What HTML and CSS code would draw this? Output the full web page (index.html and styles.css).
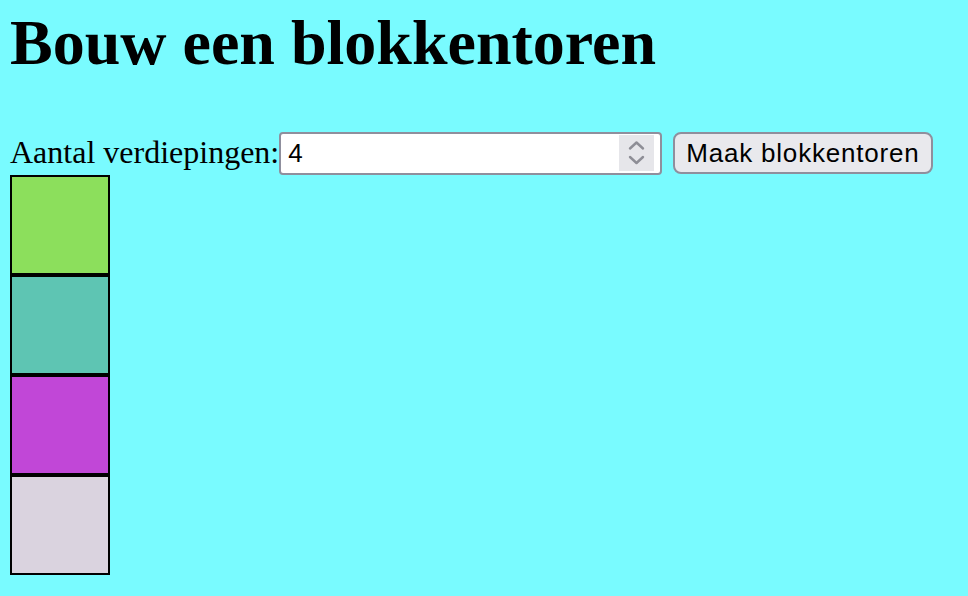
FILE: index.html
```html
<!DOCTYPE html>
<html lang="nl">
<head>
<meta charset="utf-8">
<title>Bouw een blokkentoren</title>
<link rel="stylesheet" href="styles.css">
</head>
<body>
<h1 class="title">Bouw een blokkentoren</h1>
<div class="controls">
  <label class="label" for="floors">Aantal verdiepingen:</label>
  <span class="num-field">
    <input class="num-input" id="floors" type="text" value="4">
    <span class="spin">
      <svg width="35" height="36" viewBox="0 0 35 36">
        <polyline points="11,13.5 17.5,7.5 24,13.5" fill="none" stroke="#8e8e96" stroke-width="2.4" stroke-linecap="round" stroke-linejoin="round"/>
        <polyline points="11,22 17.5,28 24,22" fill="none" stroke="#8e8e96" stroke-width="2.4" stroke-linecap="round" stroke-linejoin="round"/>
      </svg>
    </span>
  </span>
  <button class="btn" type="button">Maak blokkentoren</button>
</div>
<div class="tower">
  <div class="block green"></div>
  <div class="block teal"></div>
  <div class="block purple"></div>
  <div class="block lavender"></div>
</div>
</body>
</html>
```

FILE: styles.css
```css
html, body {
  margin: 0;
  background: #79fbff;
}
body {
  padding: 0 10px;
  font-family: "Liberation Serif", "Times New Roman", serif;
  color: #000;
}
.title {
  margin: 0 0 52px 0;
  padding-top: 6px;
  font-size: 64px;
  font-weight: bold;
  line-height: normal;
}
.controls {
  display: flex;
  align-items: center;
  height: 43px;
}
.label {
  font-size: 32px;
  line-height: normal;
  align-self: flex-start;
  margin-top: 1.5px;
}
.num-field {
  position: relative;
  display: block;
  margin-left: 0;
  height: 43px;
}
.num-input {
  box-sizing: border-box;
  width: 383px;
  height: 43px;
  margin: 0;
  padding: 0 0 0 7px;
  border: 2px solid #8f8f9d;
  border-radius: 4px;
  background: #fff;
  font-family: "Liberation Sans", Arial, sans-serif;
  font-size: 26px;
  color: #000;
  outline: none;
}
.spin {
  position: absolute;
  right: 8px;
  top: 3px;
  width: 35px;
  height: 36px;
  background: #e6e6ea;
  display: block;
}
.spin svg {
  display: block;
}
.btn {
  box-sizing: border-box;
  margin: 0 0 0 11px;
  height: 42px;
  padding: 0 11px;
  border: 2px solid #8f8f9d;
  border-radius: 8px;
  background: #e9e9ed;
  font-family: "Liberation Sans", Arial, sans-serif;
  font-size: 26px;
  letter-spacing: 0.8px;
  color: #000;
  align-self: flex-start;
}
.tower {
  display: flex;
  flex-direction: column;
}
.block {
  box-sizing: border-box;
  width: 100px;
  height: 100px;
  border: 2px solid #000;
}
.green { background: #8cdf5c; }
.teal { background: #5ec5b3; }
.purple { background: #c147d7; }
.lavender { background: #dad3df; }
```
